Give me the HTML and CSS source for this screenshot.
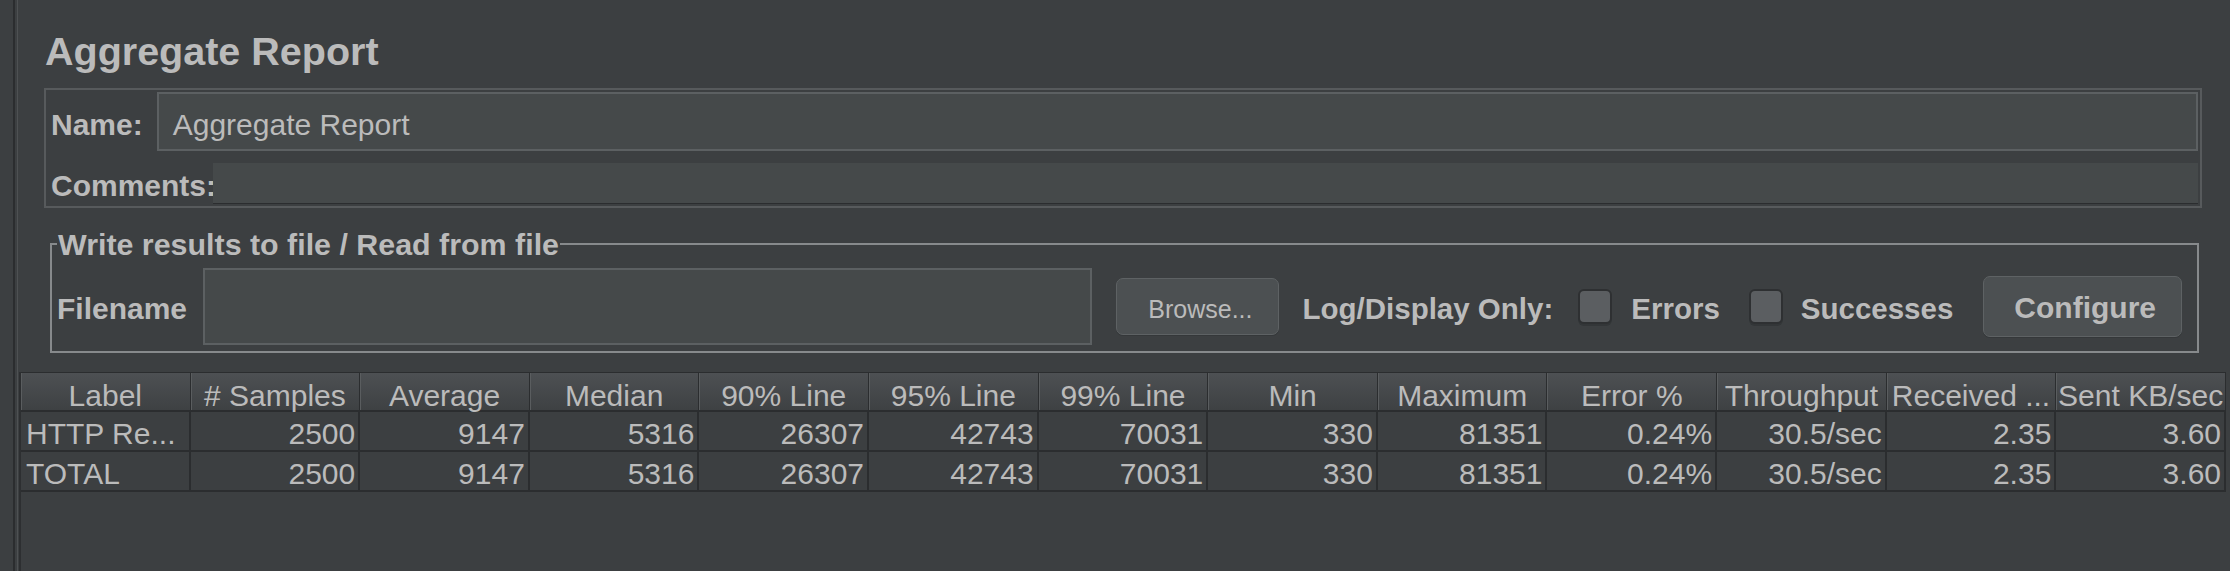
FILE: index.html
```html
<!DOCTYPE html>
<html>
<head>
<meta charset="utf-8">
<title>Aggregate Report</title>
<link rel="stylesheet" href="styles.css">
</head>
<body>
<div class="frame">
  <div class="pane">
    <h1 class="title">Aggregate Report</h1>

    <div class="namepanel">
      <div class="row name-row">
        <span class="lbl name-lbl">Name:</span>
        <div class="field name-field">Aggregate Report</div>
      </div>
      <div class="row comments-row">
        <span class="lbl comments-lbl">Comments:</span>
        <div class="field comments-field"></div>
      </div>
    </div>

    <fieldset class="filebox">
      <legend class="filebox-title">Write results to file / Read from file</legend>
      <div class="filerow">
        <span class="lbl file-lbl">Filename</span>
        <div class="field file-field"></div>
        <button class="btn browse">Browse...</button>
        <span class="lbl log-lbl">Log/Display Only:</span>
        <span class="cb cb-errors"></span>
        <span class="lbl errors-lbl">Errors</span>
        <span class="cb cb-success"></span>
        <span class="lbl success-lbl">Successes</span>
        <button class="btn configure">Configure</button>
      </div>
    </fieldset>

    <div class="viewport">
      <table class="grid">
        <thead>
          <tr>
            <th>Label</th>
            <th># Samples</th>
            <th>Average</th>
            <th>Median</th>
            <th>90% Line</th>
            <th>95% Line</th>
            <th>99% Line</th>
            <th>Min</th>
            <th>Maximum</th>
            <th>Error %</th>
            <th>Throughput</th>
            <th>Received ...</th>
            <th>Sent KB/sec</th>
          </tr>
        </thead>
        <tbody>
          <tr>
            <td class="txt">HTTP Re...</td>
            <td>2500</td>
            <td>9147</td>
            <td>5316</td>
            <td>26307</td>
            <td>42743</td>
            <td>70031</td>
            <td>330</td>
            <td>81351</td>
            <td>0.24%</td>
            <td>30.5/sec</td>
            <td>2.35</td>
            <td>3.60</td>
          </tr>
          <tr>
            <td class="txt">TOTAL</td>
            <td>2500</td>
            <td>9147</td>
            <td>5316</td>
            <td>26307</td>
            <td>42743</td>
            <td>70031</td>
            <td>330</td>
            <td>81351</td>
            <td>0.24%</td>
            <td>30.5/sec</td>
            <td>2.35</td>
            <td>3.60</td>
          </tr>
        </tbody>
      </table>
    </div>
  </div>
</div>
</body>
</html>
```

FILE: styles.css
```css
* {
  box-sizing: border-box;
}

html,
body {
  margin: 0;
  height: 100%;
}

body {
  background: #3c3f41;
  color: #bbbbbb;
  font-family: "Liberation Sans", Arial, sans-serif;
  overflow: hidden;
}

.frame {
  height: 100%;
  margin-left: 13px;
  border-left: 2px solid #2b2d2f;
  padding-left: 2px;
}

.pane {
  height: 100%;
  border-left: 1px solid #4e5153;
  display: flex;
  flex-direction: column;
}

.title {
  margin: 28px 0 0 27px;
  font-size: 39.5px;
  font-weight: bold;
  line-height: 46px;
  color: #bbbbbb;
}

/* Name / comments panel */
.namepanel {
  margin: 14px 28px 0 26px;
  border: 2px solid #575a5c;
  padding: 2px 2px 2px 5px;
}

.row {
  display: flex;
}

.name-row {
  align-items: baseline;
}

.comments-row {
  align-items: flex-start;
  margin-top: 12px;
}

.lbl {
  font-size: 30px;
  font-weight: bold;
  white-space: nowrap;
}

.name-lbl {
  margin-right: 14px;
}

.comments-lbl {
  padding-top: 8px;
  line-height: 30px;
  margin-right: -3px;
}

.field {
  background: #45494a;
}

.name-field {
  flex: 1;
  height: 59px;
  border: 2px solid #5c6062;
  padding: 6px 0 0 14px;
  font-size: 30px;
  line-height: 49px;
}

.comments-field {
  flex: 1;
  height: 41px;
  border-bottom: 1px solid #2b2d2f;
}

/* Write results box */
.filebox {
  margin: 19px 31px 0 32px;
  border: 2px solid #878a8c;
  padding: 7px 15px 6px 5px;
  min-width: 0;
}

.filebox-title {
  font-size: 30.4px;
  font-weight: bold;
  line-height: 34px;
  padding: 0 1px;
}

.filerow {
  display: flex;
  align-items: center;
  height: 77px;
}

.filerow .lbl {
  padding-top: 5px;
  line-height: 30px;
  font-size: 29.5px;
}

.filerow .file-lbl {
  font-size: 30px;
}

.file-field {
  flex: 1;
  align-self: stretch;
  border: 2px solid #5c6062;
  margin: 0 24px 0 16px;
}

.btn {
  display: flex;
  align-items: center;
  background: #4c5052;
  color: #bbbbbb;
  border: 1px solid #5e6264;
  border-radius: 7px;
  font-family: "Liberation Sans", Arial, sans-serif;
  box-shadow: 0 1px 0 #35383a;
}

.browse {
  height: 57px;
  padding: 6px 26px 0 31px;
  font-size: 25px;
  font-weight: normal;
  margin-right: 23px;
}

.configure {
  height: 61px;
  padding: 3px 25px 0 30px;
  font-size: 30px;
  font-weight: bold;
}

.log-lbl {
  margin-right: 25px;
}

.cb {
  display: block;
  width: 34px;
  height: 35px;
  background: #5b5e61;
  border: 2px solid #2e3032;
  border-radius: 6px;
  box-shadow: 0 2px 0 #333638;
}

.cb-errors {
  margin-right: 19px;
}

.errors-lbl {
  margin-right: 29px;
}

.cb-success {
  margin-right: 18px;
}

.success-lbl {
  margin-right: 30px;
}

/* Table */
.viewport {
  flex: 1;
  margin: 19px 4px 0 1px;
  border-left: 2px solid #2d2f31;
}

.grid {
  width: 100%;
  table-layout: fixed;
  border-collapse: separate;
  border-spacing: 0;
  border-top: 1px solid #2b2d2f;
  font-size: 30px;
}

.grid th {
  font-weight: normal;
  text-align: center;
  padding: 8px 0 0;
  line-height: 29px;
  white-space: nowrap;
  overflow: visible;
  background: linear-gradient(#4d5053, #3e4143);
  border-bottom: 2px solid #2b2d2f;
  border-right: 1px solid #2b2d2f;
  box-shadow: inset 1px 0 0 #5a5d5f;
}

.grid td {
  text-align: right;
  padding: 6px 3px 0 0;
  line-height: 32px;
  white-space: nowrap;
  border-bottom: 2px solid #2b2d2f;
  border-right: 2px solid #2b2d2f;
}

.grid td.txt {
  text-align: left;
  padding-left: 5px;
}
```
